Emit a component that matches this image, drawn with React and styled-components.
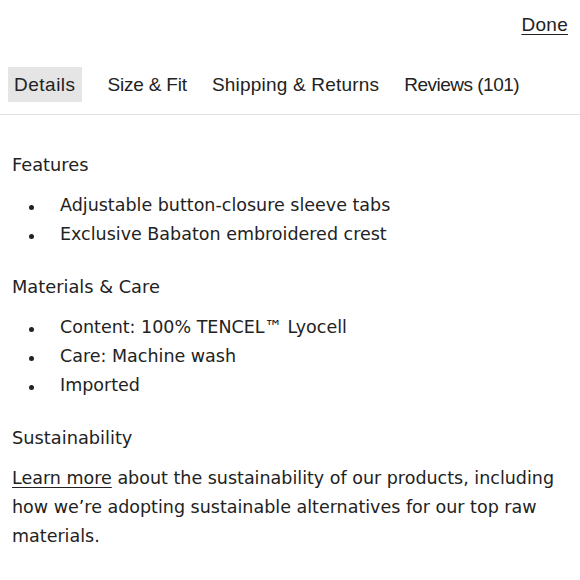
import React from 'react';
import styled, { createGlobalStyle } from 'styled-components';

const GlobalStyle = createGlobalStyle`
  body {
    margin: 0;
    background: #fff;
    font-family: 'DejaVu Sans', 'Liberation Sans', sans-serif;
    color: #222;
  }
`;

const Page = styled.div`
  width: 580px;
  height: 580px;
  overflow: hidden;
  background: #fff;
`;

const TopBar = styled.div`
  display: flex;
  justify-content: flex-end;
  padding: 14px 12px 0 0;
  height: 53px;
  box-sizing: border-box;
`;

const DoneLink = styled.a`
  font-family: 'Liberation Sans', Arial, sans-serif;
  font-size: 19px;
  letter-spacing: 0.3px;
  color: #222;
  text-decoration: underline;
  text-underline-offset: 3px;
`;

const Tabs = styled.div`
  display: flex;
  align-items: center;
  gap: 13px;
  padding: 14px 8px 12px;
  border-bottom: 1px solid #e2e2e2;
`;

const Tab = styled.div`
  font-family: 'Liberation Sans', Arial, sans-serif;
  font-size: 19px;
  letter-spacing: ${(p) => p.$spacing || '0'};
  line-height: 35px;
  padding: 0 6px;
  margin-right: ${(p) => (p.$active ? '7px' : '0')};
  background: ${(p) => (p.$active ? '#e5e5e5' : 'transparent')};
`;

const Content = styled.div`
  padding: 35px 12px 0;
`;

const Heading = styled.div`
  font-size: 17.8px;
  line-height: 29px;
`;

const List = styled.ul`
  list-style: none;
  margin: 12px 0 23px;
  padding: 0;
`;

const Item = styled.li`
  position: relative;
  font-size: 17.5px;
  line-height: 29px;
  padding-left: 48px;

  &::before {
    content: '';
    position: absolute;
    left: 17px;
    top: 14px;
    width: 5px;
    height: 5px;
    border-radius: 50%;
    background: #222;
  }
`;

const Paragraph = styled.p`
  font-size: 17.5px;
  line-height: 29px;
  margin: 12px 0 0;
`;

const Link = styled.a`
  color: #222;
  text-decoration: underline;
  text-underline-offset: 3px;
`;

export default function App() {
  return (
    <Page>
      <GlobalStyle />
      <TopBar>
        <DoneLink>Done</DoneLink>
      </TopBar>
      <Tabs>
        <Tab $active $spacing="0.5px">Details</Tab>
        <Tab $spacing="-0.2px">Size &amp; Fit</Tab>
        <Tab $spacing="0.2px">Shipping &amp; Returns</Tab>
        <Tab $spacing="-0.5px">Reviews (101)</Tab>
      </Tabs>
      <Content>
        <Heading>Features</Heading>
        <List>
          <Item>Adjustable button-closure sleeve tabs</Item>
          <Item>Exclusive Babaton embroidered crest</Item>
        </List>
        <Heading>Materials &amp; Care</Heading>
        <List>
          <Item>Content: 100% TENCEL™ Lyocell</Item>
          <Item>Care: Machine wash</Item>
          <Item>Imported</Item>
        </List>
        <Heading>Sustainability</Heading>
        <Paragraph>
          <Link>Learn more</Link> about the sustainability of our products, including how
          we’re adopting sustainable alternatives for our top raw materials.
        </Paragraph>
      </Content>
    </Page>
  );
}
